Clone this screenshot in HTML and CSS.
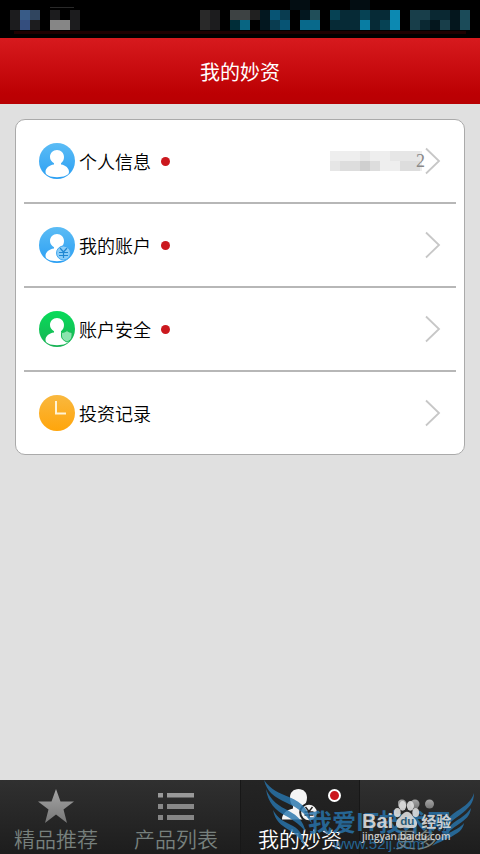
FILE: index.html
```html
<!DOCTYPE html>
<html lang="zh-CN">
<head>
	<meta charset="utf-8">
	<title>我的妙资</title>
	<link rel="stylesheet" href="styles.css">
</head>
<body>
	<!-- shared gradients and symbols -->
	<svg class="defs" width="0" height="0">
		<defs>
			<linearGradient id="blue" x1="0" y1="0" x2="0" y2="1"><stop offset="0" stop-color="#5bbcf5"/><stop offset="1" stop-color="#2b9ff3"/></linearGradient>
			<linearGradient id="green" x1="0" y1="0" x2="0" y2="1"><stop offset="0" stop-color="#08dc59"/><stop offset="1" stop-color="#19b155"/></linearGradient>
			<linearGradient id="orange" x1="0" y1="0" x2="0" y2="1"><stop offset="0" stop-color="#f9b83f"/><stop offset="1" stop-color="#ffa50b"/></linearGradient>
			<linearGradient id="grey" x1="0" y1="0" x2="0" y2="1"><stop offset="0" stop-color="#a5a5a5"/><stop offset="1" stop-color="#777"/></linearGradient>
			<symbol id="person" viewBox="0 0 36 36">
				<path fill="#fff" d="M18 7c4 0 7 3 7 7 0 2.700-1.200 5-3 6.200v1.300c4.800.7 8 3.700 8 7.500 0 3.300-5.300 5.200-12 5.200S6.500 32.300 6.500 29c0-3.800 3.400-6.800 8.500-7.500v-1.300C12.600 18.900 11 16.700 11 14c0-4 3-7 7-7z"/>
			</symbol>
			<symbol id="arrow" viewBox="0 0 16 28">
				<path fill="none" stroke="#c7c7c7" stroke-width="1.8" d="M1 1.500 14 14 1 26.500"/>
			</symbol>
		</defs>
	</svg>

	<div class="status">
		<svg width="480" height="38" shape-rendering="crispEdges">
			<path fill="#1c1c1e" d="M10 10h10v20H10zM30 20h10v10H30zM50 10h30v20H50zM200 10h20v20h-20z"/>
			<path fill="#30455f" d="M20 10h20v10H20z"/><path fill="#385b87" d="M20 10h10v10H20z"/><path fill="#344e7e" d="M20 20h10v10H20z"/>
			<path fill="#000" d="M60 10h10v10H60z"/><path fill="#868686" d="M50 20h20v10H50z"/><path fill="#292929" d="M50 7h24v1H50zM200 10h10v20h-10z"/>
			<path fill="#3d4243" d="M230 10h20v10h-20z"/><path fill="#002d38" d="M230 20h10v10h-10z"/><path fill="#086582" d="M240 20h10v10h-10z"/><path fill="#202020" d="M250 10h10v10h-10z"/>
			<path fill="#03171f" d="M260 10h60v20h-60z"/><path fill="#030d12" d="M290 0h20v10h-20zM350 0h20v10h-20z"/>
			<path fill="#075474" d="M270 10h10v10h-10zM280 20h10v10h-10z"/><path fill="#093c50" d="M270 20h10v10h-10zM280 10h10v10h-10z"/>
			<path fill="#000" d="M290 10h10v20h-10z"/>
			<path fill="#08698b" d="M300 20h20v10h-20z"/><path fill="#204e59" d="M310 10h10v10h-10z"/>
			<path fill="#062a36" d="M330 10h60v20h-60z"/><path fill="#064254" d="M330 10h10v10h-10zM360 10h10v10h-10zM380 20h10v10h-10z"/>
			<path fill="#087da3" d="M360 20h10v10h-10z"/><path fill="#0c89b2" d="M390 10h10v20h-10z"/>
			<path fill="#0a2832" d="M410 10h60v20h-60z"/><path fill="#183e4a" d="M410 10h10v20h-10zM420 10h10v10h-10zM440 20h10v10h-10z"/><path fill="#04161d" d="M430 20h10v10h-10zM450 10h10v20h-10z"/><path fill="#1b4b59" d="M460 10h10v20h-10z"/>
			<path fill="#1d0000" d="M14 31h452v3H14z"/>
		</svg>
	</div>

	<h1 class="header">我的妙资</h1>

	<div class="content">
		<ul class="menu">
			<li class="item">
				<svg class="icon" viewBox="0 0 36 36"><circle cx="18" cy="18" r="18" fill="url(#blue)"/><use href="#person"/></svg>
				<span class="name">个人信息</span><i class="dot"></i>
				<span class="account">
					<svg width="92" height="20" shape-rendering="crispEdges">
						<path fill="#eee" d="M0 0h92v20H0z"/>
						<path fill="#e6e6e6" d="M30 0h10v10H30zM60 0h30v10H60zM0 10h10v10H0z"/>
						<path fill="#ddd" d="M10 10h40v10H10zM70 10h20v10H70z"/>
						<path fill="#cfcfcf" d="M30 10h10v10H30z"/>
					</svg>
					<span class="digit">2</span>
				</span>
				<svg class="arrow"><use href="#arrow"/></svg>
			</li>
			<li class="item">
				<svg class="icon" viewBox="0 0 36 36">
					<circle cx="18" cy="18" r="18" fill="url(#blue)"/><use href="#person"/>
					<circle cx="24.500" cy="26" r="7" fill="#8bcdf8" stroke="#42a9f1"/>
					<path fill="none" stroke="#2188d2" stroke-width="1.200" d="m21 21 3.500 4 3.500-4M20 25.500h9M20 28.500h9M24.500 25v6"/>
				</svg>
				<span class="name">我的账户</span><i class="dot"></i>
				<svg class="arrow"><use href="#arrow"/></svg>
			</li>
			<li class="item">
				<svg class="icon" viewBox="0 0 36 36">
					<circle cx="18" cy="18" r="18" fill="url(#green)"/><use href="#person"/>
					<path fill="#8be4ae" stroke="#1cbb59" d="M28 19.500c1.500 1.400 3 1.900 5 2v3.500c0 3-2 4.700-5 6-3-1.300-5.500-3-5.500-6v-3.500c2.200-.1 4-.6 5.500-2z"/>
				</svg>
				<span class="name">账户安全</span><i class="dot"></i>
				<svg class="arrow"><use href="#arrow"/></svg>
			</li>
			<li class="item">
				<svg class="icon" viewBox="0 0 36 36">
					<circle cx="18" cy="18" r="18" fill="url(#orange)"/>
					<path fill="none" stroke="#fff3d5" stroke-width="2" d="M17 6v12.500h10"/>
				</svg>
				<span class="name">投资记录</span>
				<svg class="arrow"><use href="#arrow"/></svg>
			</li>
		</ul>
	</div>

	<div class="tabs">
		<div class="tab">
			<svg width="36" height="36" viewBox="0 0 36 36"><path fill="url(#grey)" d="m18 1 4.500 12.500H36L25.500 21.500 29 35l-11-8.500L7 35l3.500-13.500L0 13.500h13.500z"/></svg>
			<span>精品推荐</span>
		</div>
		<div class="tab">
			<svg width="36" height="36" viewBox="0 0 36 36">
				<path fill="#999" d="M0 5h5v4.500H0zM9 5h27v4.500H9z"/>
				<path fill="#888" d="M0 16h5v5H0zM9 16h27v5H9z"/>
				<path fill="#858585" d="M0 27h5v5H0zM9 27h27v5H9z"/>
			</svg>
			<span>产品列表</span>
		</div>
		<div class="tab _active">
			<svg width="36" height="36" viewBox="0 0 36 36">
				<path fill="#f5f5f5" d="M16.500 1c5 0 8.500 3.500 8.500 8.500 0 4-1.500 7-3.500 8.500v2.500c5 1.500 9.500 4 9.500 11H0c0-6 4.500-9.500 11-11V18C9 16.500 8 13.500 8 9.500 8 4.500 11.500 1 16.500 1z"/>
				<circle cx="27" cy="24.500" r="8.800" fill="#f5f5f5" stroke="#222" stroke-width="2"/>
				<path fill="none" stroke="#222" stroke-width="1.400" d="m23.500 19 3.500 4.500 3.500-4.500M22.500 24h9M22.500 27h9M27 23v7"/>
			</svg>
			<span>我的妙资</span>
			<i class="dot _badge"></i>
		</div>
		<div class="tab">
			<svg width="36" height="36" viewBox="0 0 36 36"><g fill="url(#grey)"><circle cx="4" cy="16" r="4.500"/><circle cx="17" cy="16" r="4.500"/><circle cx="31.500" cy="16" r="4.500"/></g></svg>
			<span>更多</span>
		</div>

		<!-- site marks over the bar -->
		<div class="mark">
			<svg width="216" height="74" viewBox="0 0 216 74">
				<g fill="#2875ad">
					<path d="M0 0c7 10 15 13 25 17 14 6 20 13 23 27-7-11-14-16-25-21C10 17 3 12 0 0z"/>
					<path d="M2 9c5 12 13 17 23 22 9 5 14 10 17 21-6-7-11-11-20-16C11 30 4 23 2 9z"/>
					<path d="M9 30c5 9 12 12 20 16 7 4 10 9 12 21-5-9-9-13-16-17-8-5-14-9-16-20z"/>
					<path d="M210 13c-3 9-9 13-17 18-9 6-13 12-14 22 4-8 8-12 17-18 9-7 14-12 14-22z"/>
					<path d="M207 28c-4 6-9 9-15 13s-9 8-10 15c4-6 7-8 13-12 7-5 11-8 12-16z"/>
					<path d="M200 43c-4 5-8 6-13 9-6 3-12 5-19 14 8-4 12-6 19-9 7-4 12-7 13-14z"/>
				</g>
			</svg>
			<b class="site">我爱IT技术网</b>
			<b class="url">www.52ij.com</b>
		</div>
		<div class="baidu">
			<div class="brand">
				<b>Bai</b>
				<svg width="28" height="31" viewBox="0 0 28 32" fill="#ddd">
					<ellipse cx="4" cy="13" rx="3.500" ry="4.800"/><ellipse cx="9.500" cy="6" rx="3.700" ry="5"/><ellipse cx="17.500" cy="6" rx="3.700" ry="5"/><ellipse cx="23" cy="13" rx="3.500" ry="4.800"/>
					<path d="M14 12c4 0 5 4 8 7 4 4 3 10-3 10-3 0-7-.8-10 0-7 1-8-6-4-10 4-3 5-7 9-7z"/>
					<text x="7" y="26">du</text>
				</svg>
				<b class="exp">经验</b>
			</div>
			<b class="address">jingyan.baidu.com</b>
		</div>
	</div>
</body>
</html>
```

FILE: styles.css
```css
html, body {
	height: 100%;
	margin: 0;
}

body {
	display: flex;
	flex-direction: column;
	width: 480px;
	height: 854px;
	overflow: hidden;
	background: #e0e0e0;
	color: #000;
	font-family: "Noto Sans CJK SC", sans-serif;
}

svg {
	display: block;
	flex-shrink: 0;
}

.defs {
	position: absolute;
}

.status {
	height: 38px;
	background: #000;
}

.header {
	height: 66px;
	margin: 0;
	background: linear-gradient(#d71a1e, #bc0003 85%, #b80003);
	color: #fff;
	font-size: 20px;
	font-weight: 400;
	line-height: 67px;
	text-align: center;
}

.content {
	flex: 1;
	padding: 15px 15px 0;
}

.menu {
	height: 336px;
	margin: 0;
	padding: 0 8px;
	box-sizing: border-box;
	border: 1px solid #aaa;
	border-radius: 10px;
	background: #fff;
	list-style: none;
}

.item {
	display: flex;
	align-items: center;
	height: 84px;
	padding: 0 15px;
	box-sizing: border-box;
	border-bottom: 2px solid #b7b7b7;
}

.item:last-child {
	border-color: transparent;
}

.icon {
	width: 36px;
	height: 36px;
}

.name {
	margin-left: 4px;
	font-size: 18px;
	font-weight: 350;
	line-height: 26px;
}

.dot {
	width: 9px;
	height: 9px;
	margin-left: 10px;
	border-radius: 50%;
	background: #cb181e;
}

.account {
	display: flex;
	align-items: center;
	margin-left: auto;
}

.digit {
	margin-left: -6px;
	color: #888;
	font-family: "Liberation Serif", serif;
	font-size: 18px;
	line-height: 20px;
}

.arrow {
	width: 16px;
	height: 28px;
	margin-left: auto;
}

.account + .arrow {
	margin-left: 0;
}

.tabs {
	display: grid;
	grid-template-columns: 112px 128px 120px 112px;
	position: relative;
	height: 74px;
	background: linear-gradient(#303030, #1d1d1d);
}

.tab {
	display: flex;
	flex-direction: column;
	align-items: center;
	position: relative;
	padding-top: 8px;
	color: #77807d;
	font-size: 21px;
	font-weight: 350;
	line-height: 28px;
}

.tab span {
	white-space: nowrap;
}

.tab._active {
	box-sizing: border-box;
	border: 1px solid #171717;
	border-width: 0 1px;
	background: linear-gradient(#242424, #1b1b1b);
	color: #fff;
}

.dot._badge {
	position: absolute;
	top: 9px;
	left: 87px;
	margin: 0;
	border: 2px solid #fff;
}

/* marks lie over the tabs */
.mark {
	position: absolute;
	top: 0;
	left: 264px;
	color: #2875ad;
	opacity: .82;
}

.site, .url {
	position: absolute;
	white-space: nowrap;
}

.site {
	top: 24px;
	left: 44px;
	font-size: 24px;
	line-height: 34px;
}

.url {
	top: 54px;
	left: 69px;
	font-family: "Liberation Sans", sans-serif;
	font-size: 15px;
	font-weight: 400;
	line-height: 20px;
}

.baidu {
	position: absolute;
	top: 20px;
	left: 362px;
	color: #ddd;
	font-family: "Liberation Sans", sans-serif;
	opacity: .9;
}

.brand {
	display: flex;
	align-items: flex-end;
	height: 31px;
	font-size: 20px;
	line-height: 20px;
}

.brand text {
	fill: #2c627f;
	font-size: 12px;
	font-weight: bold;
}

.exp {
	font-family: "Noto Sans CJK SC", sans-serif;
	font-size: 15px;
}

.address {
	display: block;
	margin-top: -2px;
	font-family: "Open Sans", sans-serif;
	font-size: 10px;
	font-weight: 600;
	line-height: 14px;
}
```
